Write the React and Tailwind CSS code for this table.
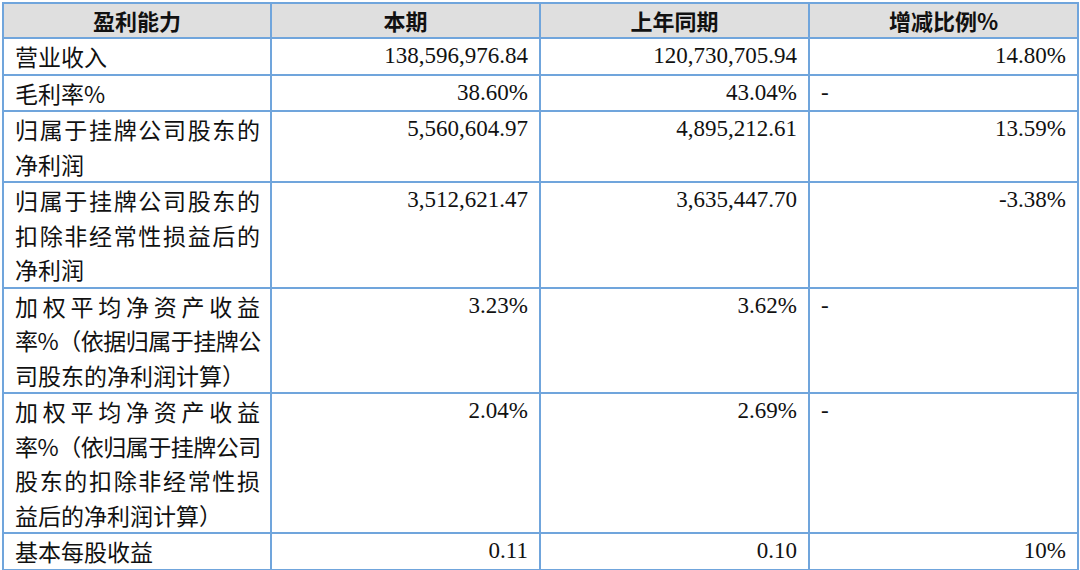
const rows = [
  { label: [['营业收入', false]], cur: '138,596,976.84', prev: '120,730,705.94', chg: '14.80%' },
  { label: [['毛利率%', false]], cur: '38.60%', prev: '43.04%', chg: '-' },
  {
    label: [['归属于挂牌公司股东的', true], ['净利润', false]],
    cur: '5,560,604.97',
    prev: '4,895,212.61',
    chg: '13.59%',
  },
  {
    label: [['归属于挂牌公司股东的', true], ['扣除非经常性损益后的', true], ['净利润', false]],
    cur: '3,512,621.47',
    prev: '3,635,447.70',
    chg: '-3.38%',
  },
  {
    label: [['加权平均净资产收益', true], ['率%（依据归属于挂牌公', 'tight'], ['司股东的净利润计算）', false]],
    cur: '3.23%',
    prev: '3.62%',
    chg: '-',
  },
  {
    label: [
      ['加权平均净资产收益', true],
      ['率%（依归属于挂牌公司', 'tight'],
      ['股东的扣除非经常性损', true],
      ['益后的净利润计算）', false],
    ],
    cur: '2.04%',
    prev: '2.69%',
    chg: '-',
  },
  { label: [['基本每股收益', false]], cur: '0.11', prev: '0.10', chg: '10%' },
];

const cjk = "font-['Noto_Sans_CJK_SC',sans-serif]";
const num = "font-['Liberation_Serif','Noto_Sans_CJK_SC',serif]";
const cell = 'border-2 border-[#70a5dc] align-top p-0';

const lineClass = (just) => {
  if (just === 'tight') return 'whitespace-nowrap tracking-[-1.2px] [text-align-last:justify]';
  if (just) return 'whitespace-nowrap [text-align-last:justify]';
  return 'whitespace-nowrap';
};

export default function App() {
  return (
    <div className="w-[1080px] h-[570px] overflow-hidden bg-white pt-[2px] pl-[2px]">
      <table className="border-collapse table-fixed w-[1075px] text-[#111]">
        <colgroup>
          <col className="w-[268px]" />
          <col className="w-[269px]" />
          <col className="w-[269px]" />
          <col className="w-[269px]" />
        </colgroup>
        <thead>
          <tr className="bg-[#dfdfdf] h-[35px]">
            {['盈利能力', '本期', '上年同期', '增减比例%'].map((h) => (
              <th
                key={h}
                className={`${cell} align-middle text-center font-bold text-[22px] leading-[33px] ${cjk}`}
              >
                {h}
              </th>
            ))}
          </tr>
        </thead>
        <tbody>
          {rows.map((r, i) => (
            <tr key={i}>
              <td className={`${cell} pl-[11px] pr-[10px] text-[23px] leading-[34.5px] ${cjk}`}>
                {r.label.map(([t, just], j) => (
                  <div key={j} className={lineClass(just)}>
                    {t}
                  </div>
                ))}
              </td>
              <td className={`${cell} pr-[11px] text-right text-[23px] leading-[34.5px] ${num}`}>{r.cur}</td>
              <td className={`${cell} pr-[11px] text-right text-[23px] leading-[34.5px] ${num}`}>{r.prev}</td>
              <td
                className={`${cell} text-[23px] leading-[34.5px] ${num} ${
                  r.chg === '-' ? 'text-left pl-[11px]' : 'text-right pr-[11px]'
                }`}
              >
                {r.chg}
              </td>
            </tr>
          ))}
          <tr className="bg-[#dfdfdf] h-[35px]">
            <td className={cell}></td>
            <td className={cell}></td>
            <td className={cell}></td>
            <td className={cell}></td>
          </tr>
        </tbody>
      </table>
    </div>
  );
}
